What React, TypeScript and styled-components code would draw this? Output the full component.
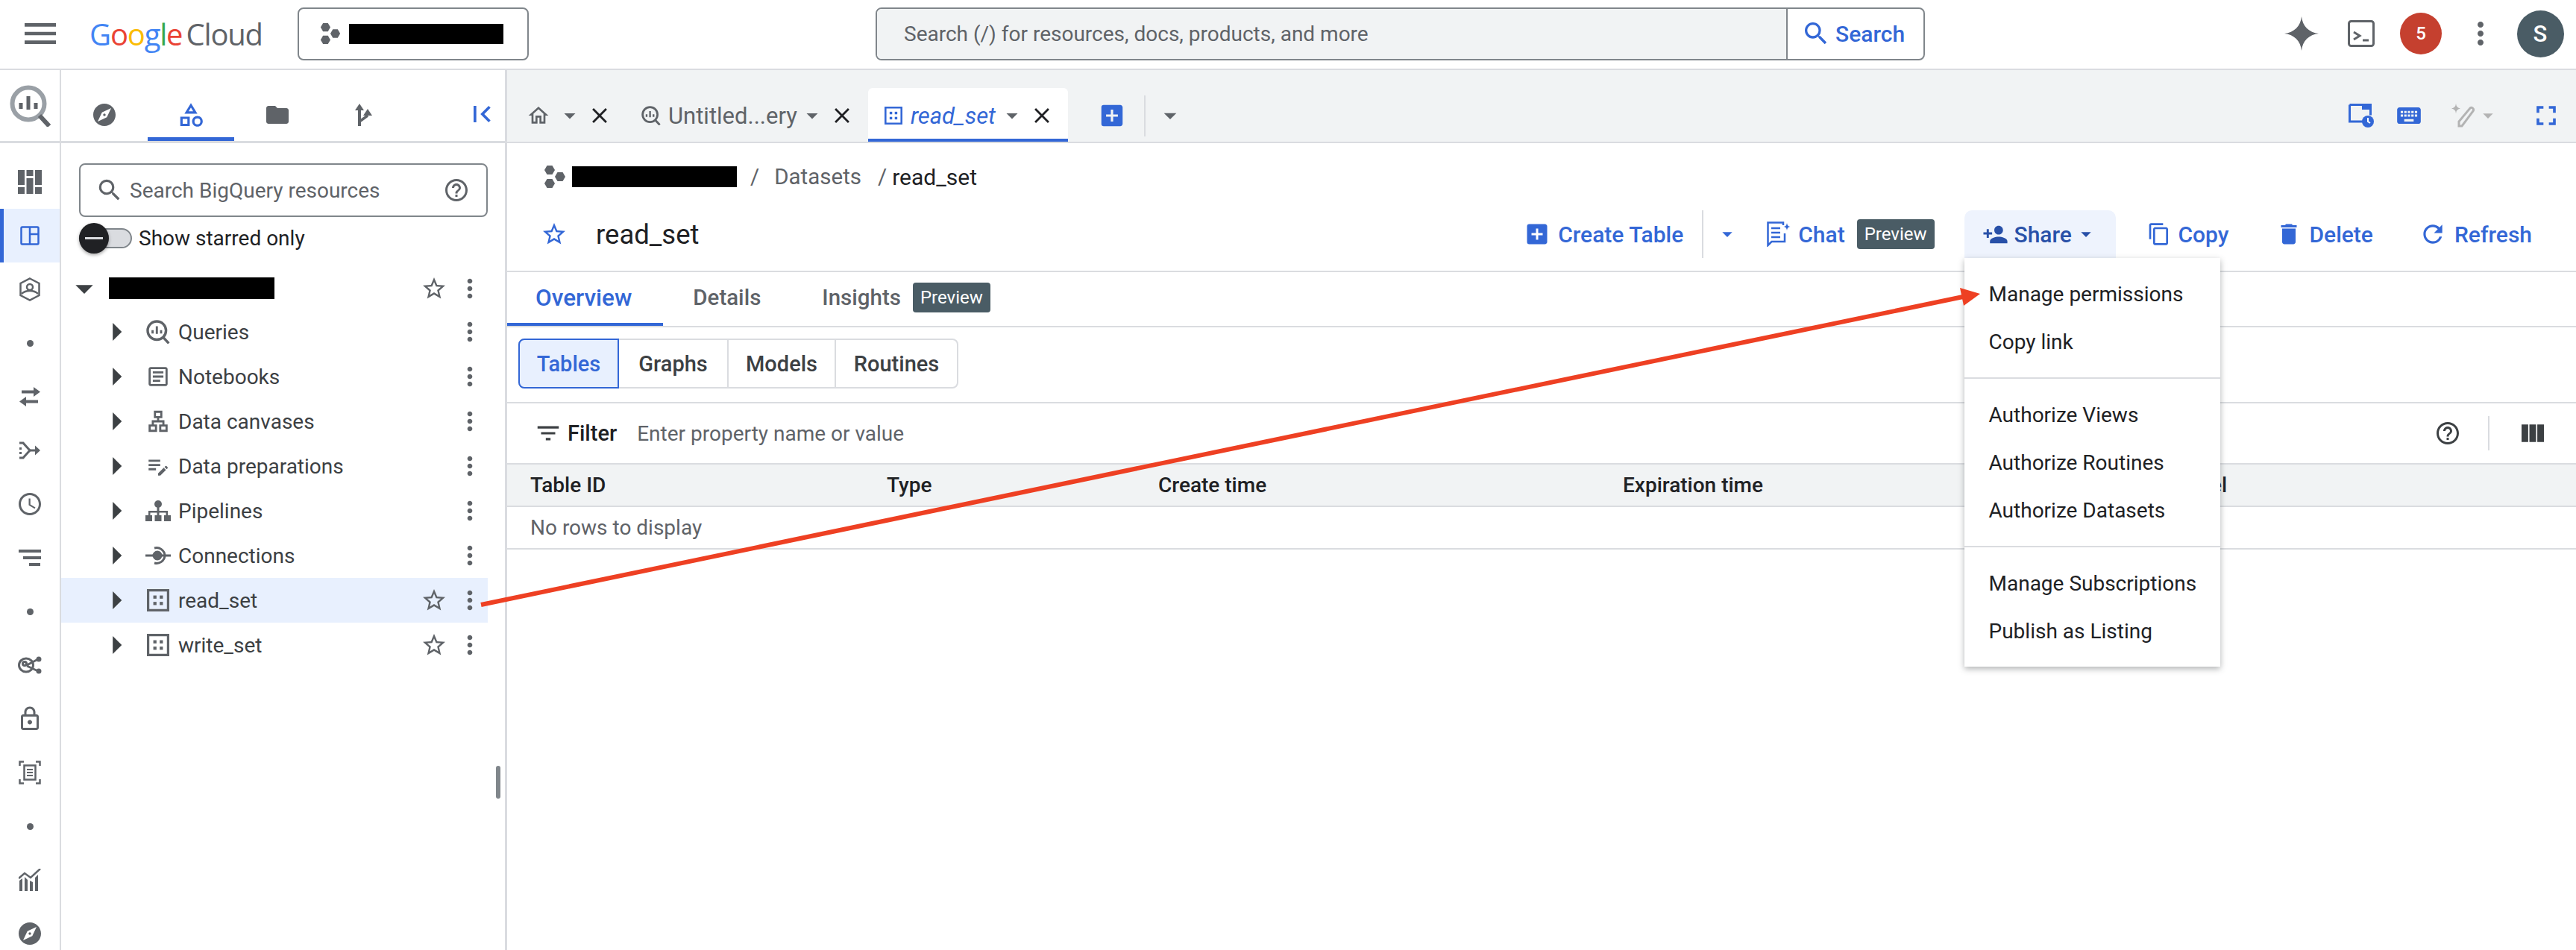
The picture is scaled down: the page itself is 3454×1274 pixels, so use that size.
import styled, { createGlobalStyle } from "styled-components";
import {
  MdMenu, MdExplore, MdOutlineCategory, MdFolder, MdFirstPage, MdSearch, MdHelpOutline,
  MdStarBorder, MdMoreVert, MdArrowRight, MdArrowDropDown, MdClose, MdOutlineHome, MdAddBox,
  MdPersonAdd, MdContentCopy, MdDelete, MdRefresh, MdFilterList, MdViewColumn, MdKeyboard,
  MdFullscreen, MdOutlineSchedule, MdOutlineLock, MdOutlineArticle, MdOutlineLan,
  MdEditNote,
} from "react-icons/md";

const BLUE = "#3367d6";
const GREY = "#5f6368";
const LINE = "#dadce0";

const GlobalStyle = createGlobalStyle`
    html, body { margin: 0; padding: 0; background: #fff; }
    * { box-sizing: border-box; }
    body { font-family: Roboto, "Liberation Sans", sans-serif; color: #202124; }
`;

const Page = styled.div`
    position: relative;
    width: 3454px;
    height: 1274px;
    overflow: hidden;
    display: flex;
    flex-direction: column;
    font-size: 28px;
`;

/* ---- top bar ---- */
const TopBar = styled.header`
    flex: none;
    height: 94px;
    display: flex;
    align-items: center;
    padding-bottom: 2px;
    border-bottom: 2px solid ${LINE};
`;

const Burger = styled.div`
    width: 108px;
    display: flex;
    justify-content: center;
    color: ${GREY};
`;

const Logo = styled.div`
    width: 279px;
    margin-left: 12px;
    font-family: "Open Sans", Roboto, sans-serif;
    font-size: 40px;
    letter-spacing: -1.2px;
    word-spacing: -4px;
    white-space: nowrap;
`;

const Letter = styled.span<{ $c: string }>`
    color: ${(p) => p.$c};
`;

const ProjectPicker = styled.div`
    width: 310px;
    height: 71px;
    border: 2px solid #80868b;
    border-radius: 8px;
    display: flex;
    align-items: center;
    padding-left: 27px;
    gap: 10px;
`;

const Redacted = styled.div<{ $w: number; $h: number; $ml?: number }>`
    flex: none;
    width: ${(p) => p.$w}px;
    height: ${(p) => p.$h}px;
    margin-left: ${(p) => p.$ml ?? 0}px;
    background: #000;
`;

const SearchBox = styled.div`
    width: 1407px;
    height: 71px;
    margin-left: 465px;
    display: flex;
    border: 2px solid #80868b;
    border-radius: 8px;
    overflow: hidden;
`;

const SearchInput = styled.div`
    width: 1221px;
    display: flex;
    align-items: center;
    padding-left: 36px;
    background: #f1f3f4;
    color: ${GREY};
    border-right: 2px solid #80868b;
`;

const SearchButton = styled.div`
    flex: 1;
    display: flex;
    align-items: center;
    padding-left: 18px;
    gap: 6px;
    color: ${BLUE};
    font-weight: 500;
    font-size: 30px;
`;

const TopActions = styled.div`
    margin-left: auto;
    padding-right: 8px;
    display: grid;
    grid-template-columns: repeat(5, 80px);
    justify-items: center;
    align-items: center;
    color: ${GREY};
`;

const Badge = styled.div`
    width: 56px;
    height: 56px;
    border-radius: 50%;
    background: #c5402f;
    color: #fff;
    font-size: 24px;
    font-weight: 500;
    display: flex;
    align-items: center;
    justify-content: center;
`;

const Avatar = styled(Badge)`
    width: 63px;
    height: 63px;
    background: #4a5c65;
    font-size: 31px;
`;

/* ---- body ---- */
const Body = styled.div`
    flex: 1;
    display: flex;
    min-height: 0;
`;

const Rail = styled.nav`
    flex: none;
    width: 82px;
    border-right: 2px solid ${LINE};
`;

const RailLogo = styled.div`
    height: 98px;
    border-bottom: 3px solid ${LINE};
    display: flex;
    align-items: center;
    justify-content: center;
    margin-right: -2px;
`;

const RailItems = styled.div`
    padding-top: 16px;
`;

const RailItem = styled.div<{ $active?: boolean }>`
    height: 72px;
    display: flex;
    align-items: center;
    justify-content: center;
    color: ${(p) => (p.$active ? BLUE : GREY)};
    background: ${(p) => (p.$active ? "#e8f0fe" : "transparent")};
    box-shadow: ${(p) => (p.$active ? `inset 5px 0 0 ${BLUE}` : "none")};
`;

const RailDot = styled.div`
    width: 9px;
    height: 9px;
    border-radius: 50%;
    background: ${GREY};
`;

const Panel = styled.aside`
    position: relative;
    flex: none;
    width: 598px;
    border-right: 3px solid ${LINE};
`;

const PanelTabs = styled.div`
    height: 98px;
    border-bottom: 3px solid ${LINE};
    display: grid;
    grid-template-columns: repeat(4, 116px) 1fr;
`;

const PanelTab = styled.div<{ $active?: boolean }>`
    display: flex;
    align-items: center;
    justify-content: center;
    padding-top: 30px;
    color: ${(p) => (p.$active ? BLUE : GREY)};
    border-bottom: 5px solid ${(p) => (p.$active ? BLUE : "transparent")};
`;

const Collapse = styled.div`
    display: flex;
    align-items: center;
    justify-content: flex-end;
    padding: 22px 9px 0 0;
    color: ${BLUE};
`;

const ResourceSearch = styled.div`
    margin: 27px 0 0 24px;
    width: 548px;
    height: 72px;
    border: 2px solid #80868b;
    border-radius: 8px;
    display: flex;
    align-items: center;
    padding: 0 22px 0 20px;
    color: ${GREY};
`;

const ResourceText = styled.span`
    flex: 1;
    margin-left: 8px;
`;

const ToggleRow = styled.div`
    margin: 8px 0 0 24px;
    height: 40px;
    display: flex;
    align-items: center;
`;

const Track = styled.div`
    position: relative;
    width: 71px;
    height: 27px;
    background: #dadce0;
    border: 2px solid #80868b;
    border-radius: 14px;
`;

const Thumb = styled.div`
    position: absolute;
    left: -2px;
    top: -9px;
    width: 40px;
    height: 41px;
    border-radius: 50%;
    background: #202124;
    box-shadow: 0 2px 4px rgba(0, 0, 0, 0.35);
    display: flex;
    align-items: center;
    justify-content: center;
    &::before {
        content: "";
        width: 24px;
        height: 3px;
        background: #dadce0;
    }
`;

const ToggleLabel = styled.span`
    margin-left: 9px;
`;

const Tree = styled.div`
    margin-top: 19px;
    width: 572px;
`;

const TreeRow = styled.div<{ $active?: boolean; $root?: boolean }>`
    height: ${(p) => (p.$root ? 57 : 60)}px;
    display: flex;
    align-items: center;
    padding-left: ${(p) => (p.$root ? 7 : 50)}px;
    background: ${(p) => (p.$active ? "#e8f0fe" : "transparent")};
    color: #3c4043;
`;

const Twisty = styled.div`
    flex: none;
    width: 48px;
    display: flex;
    justify-content: center;
    color: #3c4043;
    svg { flex: none; }
`;

const TreeIcon = styled.div`
    flex: none;
    width: 34px;
    margin-left: 15px;
    display: flex;
    justify-content: center;
    color: ${GREY};
`;

const TreeLabel = styled.span`
    flex: 1;
    margin-left: 10px;
`;

const RowAction = styled.div`
    flex: none;
    width: 48px;
    display: flex;
    justify-content: center;
    color: ${GREY};
`;

const Scroll = styled.div`
    position: absolute;
    left: 583px;
    top: 933px;
    width: 6px;
    height: 44px;
    border-radius: 3px;
    background: #80868b;
`;

/* ---- main area ---- */
const Main = styled.main`
    flex: 1;
    min-width: 0;
    display: flex;
    flex-direction: column;
`;

const TabBar = styled.div`
    flex: none;
    height: 98px;
    background: #f1f3f4;
    border-bottom: 2px solid ${LINE};
    display: flex;
    align-items: flex-end;
    padding-left: 8px;
`;

const Tab = styled.div<{ $active?: boolean }>`
    height: 72px;
    display: flex;
    align-items: center;
    padding: 6px 19px 0 20px;
    color: ${(p) => (p.$active ? BLUE : GREY)};
    background: ${(p) => (p.$active ? "#fff" : "transparent")};
    border-radius: 6px 6px 0 0;
    border-bottom: 4px solid ${(p) => (p.$active ? BLUE : "transparent")};
`;

const TabIcon = styled.div`
    flex: none;
    width: 28px;
    display: flex;
    justify-content: center;
    svg { flex: none; }
`;

const TabText = styled.span<{ $active?: boolean }>`
    margin-left: 9px;
    font-size: 31px;
    font-style: ${(p) => (p.$active ? "italic" : "normal")};
`;

const TabCaret = styled.div<{ $gap: number }>`
    flex: none;
    width: 24px;
    margin-left: ${(p) => p.$gap}px;
    display: flex;
    justify-content: center;
    color: ${GREY};
    svg { flex: none; }
`;

const TabClose = styled.div`
    flex: none;
    width: 32px;
    margin-left: 12px;
    display: flex;
    justify-content: center;
    color: #202124;
    svg { flex: none; }
`;

const TabTools = styled.div`
    height: 72px;
    padding: 6px 0 4px 40px;
    display: flex;
    align-items: center;
    color: ${BLUE};
`;

const TabDivider = styled.div`
    width: 2px;
    height: 55px;
    margin: 0 13px 0 24px;
    background: ${LINE};
`;

const RightTools = styled.div`
    margin-left: auto;
    height: 72px;
    padding: 6px 2px 4px 0;
    display: flex;
    align-items: center;
    color: ${BLUE};
`;

const RightTool = styled.div<{ $w: number }>`
    width: ${(p) => p.$w}px;
    display: flex;
    justify-content: center;
    align-items: center;
`;

const Breadcrumb = styled.div`
    height: 90px;
    padding-left: 48px;
    display: flex;
    align-items: center;
    color: ${GREY};
    font-size: 29.5px;
`;

const Slash = styled.span<{ $lead: number; $gap: number }>`
    margin: 0 ${(p) => p.$gap}px 0 ${(p) => p.$lead}px;
`;

const Current = styled.span`
    color: #202124;
    font-size: 30px;
`;

const TitleRow = styled.div`
    height: 83px;
    padding: 0 29px 17px 39px;
    border-bottom: 2px solid ${LINE};
    display: flex;
    align-items: center;
    flex: none;
`;

const StarBox = styled.div`
    width: 48px;
    display: flex;
    justify-content: center;
    color: ${BLUE};
`;

const Title = styled.h1`
    margin: 0 0 0 32px;
    font-size: 36.5px;
    font-weight: 400;
`;

const Toolbar = styled.div`
    margin-left: auto;
    height: 64px;
    display: flex;
    align-items: center;
    color: ${BLUE};
    font-weight: 500;
    font-size: 30px;
`;

const ToolButton = styled.div<{ $pad?: number }>`
    height: 64px;
    display: flex;
    align-items: center;
    gap: 10px;
    padding: 0 ${(p) => p.$pad ?? 31}px;
`;

const ToolDivider = styled.div`
    width: 2px;
    height: 64px;
    background: ${LINE};
`;

const ToolCaret = styled.div`
    width: 64px;
    margin-right: 21px;
    display: flex;
    justify-content: center;
    svg { flex: none; }
`;

const PreviewBadge = styled.span<{ $gap: number }>`
    margin-left: ${(p) => p.$gap}px;
    height: 40px;
    padding: 0 10px;
    display: inline-flex;
    align-items: center;
    border-radius: 4px;
    background: #4a5c65;
    color: #fff;
    font-size: 24px;
    font-weight: 400;
`;

const ShareWrap = styled.div`
    position: relative;
    margin: 0 11px 0 40px;
`;

const ShareButton = styled.div`
    width: 203px;
    height: 64px;
    display: flex;
    align-items: center;
    padding-left: 24px;
    gap: 8px;
    border-radius: 10px 10px 0 0;
    background: #eef3fd;
    color: #2850a8;
    svg { flex: none; }
`;

const ShareCaret = styled.div`
    display: flex;
    margin-left: -5px;
`;

const Menu = styled.div`
    position: absolute;
    left: 0;
    top: 100%;
    z-index: 5;
    width: 343px;
    padding: 16px 0;
    background: #fff;
    box-shadow: 0 3px 8px rgba(60, 64, 67, 0.4);
    color: #202124;
    font-weight: 400;
    font-size: 28px;
`;

const MenuItem = styled.div`
    height: 64px;
    padding-left: 33px;
    display: flex;
    align-items: center;
    white-space: nowrap;
`;

const MenuRule = styled.div`
    height: 2px;
    margin: 16px 0;
    background: ${LINE};
`;

const SubTabs = styled.div`
    flex: none;
    height: 74px;
    border-bottom: 2px solid ${LINE};
    display: flex;
`;

const SubTab = styled.div<{ $active?: boolean; $lead?: number }>`
    padding: 0 42px 0 ${(p) => p.$lead ?? 40}px;
    display: flex;
    align-items: center;
    font-size: ${(p) => (p.$active ? 31.5 : 29.5)}px;
    color: ${(p) => (p.$active ? BLUE : GREY)};
    font-weight: 500;
    border-bottom: 4px solid ${(p) => (p.$active ? BLUE : "transparent")};
`;

const SegmentRow = styled.div`
    flex: none;
    height: 102px;
    padding: 15px 0 0 15px;
    border-bottom: 2px solid ${LINE};
`;

const Segments = styled.div`
    display: inline-grid;
    grid-template-columns: 133px 145px 144px 164px;
    height: 67px;
    border: 2px solid ${LINE};
    border-radius: 8px;
    font-size: 29px;
`;

const Segment = styled.div<{ $active?: boolean }>`
    margin: ${(p) => (p.$active ? "-2px 0 -2px -2px" : "0")};
    display: flex;
    align-items: center;
    justify-content: center;
    font-weight: 500;
    color: ${(p) => (p.$active ? BLUE : "#3c4043")};
    background: ${(p) => (p.$active ? "#e8f0fe" : "transparent")};
    border: ${(p) => (p.$active ? `2px solid ${BLUE}` : "none")};
    border-left: ${(p) => (p.$active ? `2px solid ${BLUE}` : `2px solid ${LINE}`)};
    border-radius: ${(p) => (p.$active ? "8px 0 0 8px" : "0")};
    &:nth-child(2) { border-left: none; }
`;

const FilterRow = styled.div`
    flex: none;
    height: 80px;
    padding: 0 38px 0 36px;
    display: flex;
    align-items: center;
    color: #3c4043;
    svg { flex: none; }
`;

const FilterLabel = styled.span`
    margin-left: 7px;
    font-weight: 500;
    font-size: 29px;
    color: #202124;
`;

const FilterHint = styled.span`
    margin-left: 27px;
    flex: 1;
    font-size: 28px;
    color: ${GREY};
`;

const FilterRule = styled.div`
    width: 2px;
    height: 46px;
    margin: 0 38px 0 36px;
    background: ${LINE};
`;

const TableRow = styled.div<{ $head?: boolean }>`
    flex: none;
    height: ${(p) => (p.$head ? 59 : 57)}px;
    padding-left: 31px;
    display: grid;
    grid-template-columns: 478px 364px 623px 742px 1fr;
    align-items: center;
    background: ${(p) => (p.$head ? "#f1f3f4" : "#fff")};
    border-top: ${(p) => (p.$head ? `2px solid ${LINE}` : "none")};
    border-bottom: 2px solid ${LINE};
    color: ${(p) => (p.$head ? "#202124" : GREY)};
    font-weight: ${(p) => (p.$head ? 500 : 400)};
`;

const Annotation = styled.svg`
    position: absolute;
    left: 0;
    top: 0;
    z-index: 10;
    pointer-events: none;
`;

/* ---- drawn icons ---- */
function hex(cx: number, cy: number, r: number) {
  const h = r * 0.866;
  return `${cx - r},${cy} ${cx - r / 2},${cy - h} ${cx + r / 2},${cy - h} ${cx + r},${cy} ${cx + r / 2},${cy + h} ${cx - r / 2},${cy + h}`;
}

const ProjectIcon = ({ size = 30 }: { size?: number }) => (
  <svg width={size} height={size} viewBox="0 0 30 32" fill="#5f6368">
    <polygon points={hex(8, 7, 7)} />
    <polygon points={hex(22, 16, 7)} />
    <polygon points={hex(8, 25, 7)} />
  </svg>
);

const GoogleSpark = () => (
  <svg width="48" height="48" viewBox="0 0 24 24" fill="#5f6368">
    <path d="M12 0.5C12.6 7 17 11.4 23.5 12 17 12.6 12.6 17 12 23.5 11.4 17 7 12.6 0.5 12 7 11.4 11.4 7 12 0.5z" />
  </svg>
);

const ShellIcon = () => (
  <svg width="36" height="36" viewBox="0 0 36 36" fill="none" stroke="#5f6368">
    <rect x="1.5" y="1.5" width="33" height="33" rx="3" strokeWidth="3" />
    <path d="M8 16l8 5-8 5" strokeWidth="3" />
    <path d="M20 27h8" strokeWidth="3" />
  </svg>
);

const QueryLogo = ({ size, ring = "#9aa0a6", tail = "#5f6368", bar = "#5f6368" }: { size: number; ring?: string; tail?: string; bar?: string }) => (
  <svg width={size} height={size} viewBox="0 0 56 56" fill="none">
    <circle cx="25" cy="25" r="21.5" stroke={ring} strokeWidth="6" />
    <path d="M40 41l13 14" stroke={tail} strokeWidth="6" />
    <path d="M15 24v8M25 15v18M35 24v8" stroke={bar} strokeWidth="5" />
  </svg>
);

const BoardIcon = () => (
  <svg width="32" height="32" viewBox="0 0 32 32" fill="#5f6368">
    <rect x="0" y="0" width="9" height="20" /><rect x="0" y="23" width="9" height="9" />
    <rect x="11.5" y="0" width="9" height="8" /><rect x="11.5" y="11" width="9" height="21" />
    <rect x="23" y="0" width="9" height="20" /><rect x="23" y="23" width="9" height="9" />
  </svg>
);

const LayoutIcon = () => (
  <svg width="26" height="26" viewBox="0 0 26 26" fill="none" stroke="#3367d6" strokeWidth="2.5">
    <rect x="1.5" y="1.5" width="23" height="23" rx="1.5" />
    <path d="M13 1.5v23M13 11h11.5" />
  </svg>
);

const GuardIcon = () => (
  <svg width="28" height="32" viewBox="0 0 28 32" fill="none" stroke="#5f6368" strokeWidth="2.5">
    <path d="M14 1.5L26.5 8v16L14 30.5 1.5 24V8z" />
    <circle cx="14" cy="13" r="4" />
    <path d="M3 22c3-3 6-4 11-4s8 1 11 4" />
  </svg>
);

const ExchangeIcon = () => (
  <svg width="28" height="26" viewBox="0 0 28 26" fill="#5f6368">
    <path d="M28 6.500L19 0v4.500H3v4h16V13z" />
    <path d="M0 19.500L9 13v4.500h16v4H9V26z" />
  </svg>
);

const MergeIcon = () => (
  <svg width="30" height="30" viewBox="0 0 30 30" fill="#5f6368">
    <path d="M1 5h5l9 10-9 10H1" fill="none" stroke="#5f6368" strokeWidth="3" />
    <rect x="1" y="11" width="3" height="3" /><rect x="1" y="17" width="3" height="3" />
    <path d="M14 13.500h8v-5l7 6.500-7 6.500v-5h-8z" />
  </svg>
);

const StackIcon = () => (
  <svg width="30" height="22" viewBox="0 0 30 22" fill="#5f6368">
    <rect x="0" y="0" width="30" height="4" /><rect x="6" y="9" width="24" height="4" /><rect x="14" y="18" width="15" height="4" />
  </svg>
);

const OrbitIcon = () => (
  <svg width="32" height="24" viewBox="0 0 32 24" fill="none" stroke="#5f6368" strokeWidth="3">
    <ellipse cx="11" cy="12" rx="9.500" ry="9" />
    <circle cx="9" cy="10" r="2.500" />
    <path d="M12 12l15-8M12 13l15 7" />
    <circle cx="28" cy="4" r="2" fill="#5f6368" /><circle cx="28" cy="20" r="2" fill="#5f6368" />
  </svg>
);

const ScanIcon = () => (
  <svg width="30" height="32" viewBox="0 0 30 32" fill="none" stroke="#5f6368" strokeWidth="2.5">
    <path d="M1.500 7V1.500H7M23 1.500h5.500V7M1.500 25v5.500H7M23 30.500h5.500V25" />
    <rect x="7.500" y="6.500" width="15" height="19" />
    <path d="M11 12h8M11 16h8M11 20h8" strokeWidth="2" />
  </svg>
);

const TrendIcon = () => (
  <svg width="30" height="30" viewBox="0 0 30 30" fill="#5f6368">
    <path d="M1 30V16l4-3v17zM8 30V11l4 4v15zM15 30V16l4 2v12zM22 30V12l4-4v22z" />
    <path d="M0 13L8 6l8 6L29 0" fill="none" stroke="#5f6368" strokeWidth="2.500" />
  </svg>
);

const ForkIcon = () => (
  <svg width="24" height="30" viewBox="0 0 24 30" fill="#5f6368">
    <path d="M6 0l6 9H8v21H4V9H0z" />
    <path d="M6 24L17 16" stroke="#5f6368" strokeWidth="3.500" fill="none" />
    <path d="M17 7l6 9H11z" />
  </svg>
);

const DatasetIcon = ({ size = 30, color = "#5f6368" }: { size?: number; color?: string }) => (
  <svg width={size} height={size} viewBox="0 0 28 28" fill={color}>
    <path fillRule="evenodd" d="M0 0h28v28H0zM3 3v22h22V3z" />
    <rect x="8" y="8" width="4" height="4" /><rect x="16" y="8" width="4" height="4" />
    <rect x="8" y="16" width="4" height="4" /><rect x="16" y="16" width="4" height="4" />
  </svg>
);

const PipelineIcon = () => (
  <svg width="34" height="28" viewBox="0 0 34 28" fill="#5f6368">
    <circle cx="17" cy="5" r="5" />
    <path d="M15.500 8h3v6H30v6h-2.500v-3.500h-9V20h-3v-3.500h-9V20H4v-6h11.500z" />
    <rect x="0" y="20" width="9" height="8" /><rect x="12.500" y="20" width="9" height="8" /><rect x="25" y="20" width="9" height="8" />
  </svg>
);

const ConnectIcon = () => (
  <svg width="34" height="26" viewBox="0 0 34 26" fill="none" stroke="#5f6368" strokeWidth="3">
    <path d="M0 13h14M21 13h13" />
    <circle cx="16" cy="13" r="5" fill="#5f6368" />
    <path d="M12 3a11 11 0 0 1 14 10 11 11 0 0 1-14 10" />
  </svg>
);

const ScheduleFolderIcon = () => (
  <svg width="34" height="32" viewBox="0 0 34 32" fill="none">
    <path d="M1.500 1.500h28v14M26 24H1.500V1.500" stroke="#3367d6" strokeWidth="3" />
    <path d="M18 1.500h11.500V8H18z" fill="#3367d6" />
    <circle cx="26" cy="24" r="8" fill="#3367d6" />
    <path d="M26 19v5l3 2" stroke="#fff" strokeWidth="2" />
  </svg>
);

const SparkPenIcon = () => (
  <svg width="34" height="32" viewBox="0 0 34 32" fill="none">
    <path d="M7 0c.5 4 2.500 6 6 6.500C9.500 7 7.500 9 7 13 6.500 9 4.500 7 1 6.500 4.500 6 6.500 4 7 0z" fill="#b3b3b3" />
    <path d="M11 30l0-6L26 6c2-2 6 1 4 4L15 30z" stroke="#b3b3b3" strokeWidth="3" />
  </svg>
);

const ChatSparkIcon = () => (
  <svg width="32" height="34" viewBox="0 0 32 34" fill="none" stroke="#3367d6" strokeWidth="2.500">
    <path d="M22 5V1.500H1.500V32l5-5H24V16" />
    <path d="M6 9h12M6 15h12M6 21h12" />
    <path d="M27 2c.4 3 1.500 4.500 4.500 5-3 .5-4.100 2-4.500 5-.4-3-1.500-4.500-4.500-5 3-.5 4.100-2 4.500-5z" fill="#3367d6" stroke="none" />
  </svg>
);

const Caret = ({ size = 36, color }: { size?: number; color?: string }) => <MdArrowDropDown size={size} color={color} />;

const railItems = [
  <BoardIcon />, <LayoutIcon />, <GuardIcon />, <RailDot />, <ExchangeIcon />, <MergeIcon />,
  <MdOutlineSchedule size={36} />, <StackIcon />, <RailDot />, <OrbitIcon />, <MdOutlineLock size={36} />,
  <ScanIcon />, <RailDot />, <TrendIcon />, <MdExplore size={36} />,
];

const treeChildren = [
  { label: "Queries", icon: <QueryLogo size={32} ring="#5f6368" bar="#5f6368" /> },
  { label: "Notebooks", icon: <MdOutlineArticle size={34} /> },
  { label: "Data canvases", icon: <MdOutlineLan size={36} /> },
  { label: "Data preparations", icon: <MdEditNote size={36} /> },
  { label: "Pipelines", icon: <PipelineIcon /> },
  { label: "Connections", icon: <ConnectIcon /> },
];

const columns = ["Table ID", "Type", "Create time", "Expiration time", "Label"];

export default function App() {
  return (
    <Page>
      <GlobalStyle />
      <TopBar>
        <Burger><MdMenu size={56} /></Burger>
        <Logo>
          <Letter $c="#4285f4">G</Letter><Letter $c="#ea4335">o</Letter><Letter $c="#fbbc05">o</Letter>
          <Letter $c="#4285f4">g</Letter><Letter $c="#34a853">l</Letter><Letter $c="#ea4335">e</Letter>
          <Letter $c="#5f6368"> Cloud</Letter>
        </Logo>
        <ProjectPicker>
          <ProjectIcon />
          <Redacted $w={207} $h={27} />
        </ProjectPicker>
        <SearchBox>
          <SearchInput>Search (/) for resources, docs, products, and more</SearchInput>
          <SearchButton><MdSearch size={40} />Search</SearchButton>
        </SearchBox>
        <TopActions>
          <GoogleSpark />
          <ShellIcon />
          <Badge>5</Badge>
          <MdMoreVert size={48} />
          <Avatar>S</Avatar>
        </TopActions>
      </TopBar>

      <Body>
        <Rail>
          <RailLogo><QueryLogo size={56} /></RailLogo>
          <RailItems>
            {railItems.map((icon, i) => (
              <RailItem key={i} $active={i === 1}>{icon}</RailItem>
            ))}
          </RailItems>
        </Rail>

        <Panel>
          <PanelTabs>
            <PanelTab><MdExplore size={36} /></PanelTab>
            <PanelTab $active><MdOutlineCategory size={38} /></PanelTab>
            <PanelTab><MdFolder size={36} /></PanelTab>
            <PanelTab><ForkIcon /></PanelTab>
            <Collapse><MdFirstPage size={44} /></Collapse>
          </PanelTabs>
          <ResourceSearch>
            <MdSearch size={38} />
            <ResourceText>Search BigQuery resources</ResourceText>
            <MdHelpOutline size={36} />
          </ResourceSearch>
          <ToggleRow>
            <Track><Thumb /></Track>
            <ToggleLabel>Show starred only</ToggleLabel>
          </ToggleRow>
          <Tree>
            <TreeRow $root>
              <Twisty><MdArrowDropDown size={56} /></Twisty>
              <Redacted $w={222} $h={29} $ml={9} />
              <TreeLabel />
              <RowAction><MdStarBorder size={36} /></RowAction>
              <RowAction><MdMoreVert size={40} /></RowAction>
            </TreeRow>
            {treeChildren.map((row) => (
              <TreeRow key={row.label}>
                <Twisty><MdArrowRight size={58} /></Twisty>
                <TreeIcon>{row.icon}</TreeIcon>
                <TreeLabel>{row.label}</TreeLabel>
                <RowAction><MdMoreVert size={40} /></RowAction>
              </TreeRow>
            ))}
            {["read_set", "write_set"].map((name, i) => (
              <TreeRow key={name} $active={i === 0}>
                <Twisty><MdArrowRight size={58} /></Twisty>
                <TreeIcon><DatasetIcon /></TreeIcon>
                <TreeLabel>{name}</TreeLabel>
                <RowAction><MdStarBorder size={36} /></RowAction>
                <RowAction><MdMoreVert size={40} /></RowAction>
              </TreeRow>
            ))}
          </Tree>
          <Scroll />
        </Panel>

        <Main>
          <TabBar>
            <Tab>
              <TabIcon><MdOutlineHome size={32} /></TabIcon>
              <TabCaret $gap={16}><Caret /></TabCaret>
              <TabClose><MdClose size={34} /></TabClose>
            </Tab>
            <Tab>
              <TabIcon><QueryLogo size={26} ring="#5f6368" /></TabIcon>
              <TabText>Untitled...ery</TabText>
              <TabCaret $gap={8}><Caret /></TabCaret>
              <TabClose><MdClose size={34} /></TabClose>
            </Tab>
            <Tab $active>
              <TabIcon><DatasetIcon size={24} color={BLUE} /></TabIcon>
              <TabText $active>read_set</TabText>
              <TabCaret $gap={10}><Caret /></TabCaret>
              <TabClose><MdClose size={34} /></TabClose>
            </Tab>
            <TabTools>
              <MdAddBox size={38} />
              <TabDivider />
              <Caret size={40} color={GREY} />
            </TabTools>
            <RightTools>
              <RightTool $w={64}><ScheduleFolderIcon /></RightTool>
              <RightTool $w={64}><MdKeyboard size={38} /></RightTool>
              <RightTool $w={114}><SparkPenIcon /><Caret size={32} color="#b3b3b3" /></RightTool>
              <RightTool $w={76}><MdFullscreen size={44} /></RightTool>
            </RightTools>
          </TabBar>

          <Breadcrumb>
            <ProjectIcon size={32} />
            <Redacted $w={221} $h={28} $ml={7} />
            <Slash $lead={18} $gap={20}>/</Slash>
            <span>Datasets</span>
            <Slash $lead={22} $gap={7}>/</Slash>
            <Current>read_set</Current>
          </Breadcrumb>

          <TitleRow>
            <StarBox><MdStarBorder size={36} /></StarBox>
            <Title>read_set</Title>
            <Toolbar>
              <ToolButton $pad={25}><MdAddBox size={36} />Create Table</ToolButton>
              <ToolDivider />
              <ToolCaret><Caret size={32} /></ToolCaret>
              <ToolButton $pad={0}><ChatSparkIcon />Chat<PreviewBadge $gap={6}>Preview</PreviewBadge></ToolButton>
              <ShareWrap>
                <ShareButton><MdPersonAdd size={35} />Share<ShareCaret><Caret size={32} /></ShareCaret></ShareButton>
                <Menu>
                  <MenuItem>Manage permissions</MenuItem>
                  <MenuItem>Copy link</MenuItem>
                  <MenuRule />
                  <MenuItem>Authorize Views</MenuItem>
                  <MenuItem>Authorize Routines</MenuItem>
                  <MenuItem>Authorize Datasets</MenuItem>
                  <MenuRule />
                  <MenuItem>Manage Subscriptions</MenuItem>
                  <MenuItem>Publish as Listing</MenuItem>
                </Menu>
              </ShareWrap>
              <ToolButton><MdContentCopy size={32} />Copy</ToolButton>
              <ToolButton><MdDelete size={36} />Delete</ToolButton>
              <ToolButton $pad={30}><MdRefresh size={38} />Refresh</ToolButton>
            </Toolbar>
          </TitleRow>

          <SubTabs>
            <SubTab $active $lead={38}>Overview</SubTab>
            <SubTab>Details</SubTab>
            <SubTab>Insights<PreviewBadge $gap={16}>Preview</PreviewBadge></SubTab>
          </SubTabs>

          <SegmentRow>
            <Segments>
              <Segment $active>Tables</Segment>
              <Segment>Graphs</Segment>
              <Segment>Models</Segment>
              <Segment>Routines</Segment>
            </Segments>
          </SegmentRow>

          <FilterRow>
            <MdFilterList size={38} />
            <FilterLabel>Filter</FilterLabel>
            <FilterHint>Enter property name or value</FilterHint>
            <MdHelpOutline size={36} />
            <FilterRule />
            <MdViewColumn size={40} />
          </FilterRow>

          <TableRow $head>
            {columns.map((c) => <span key={c}>{c}</span>)}
          </TableRow>
          <TableRow>
            <span>No rows to display</span>
          </TableRow>
        </Main>
      </Body>

      <Annotation width="3454" height="1274" viewBox="0 0 3454 1274">
        <path d="M645 811L2632 398" stroke="#ee4023" strokeWidth="6" fill="none" />
        <polygon points="2655,394 2628,386 2633,410" fill="#ee4023" />
      </Annotation>
    </Page>
  );
}
